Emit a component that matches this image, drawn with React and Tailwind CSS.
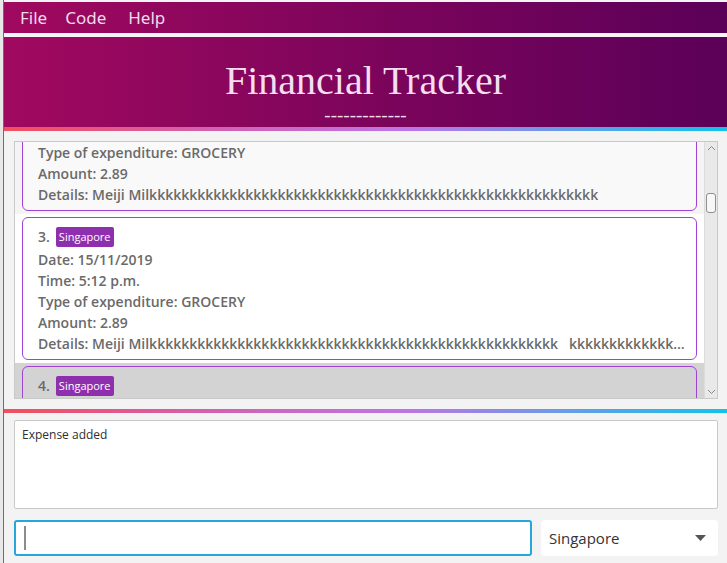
import React from 'react';

const sans = { fontFamily: '"Open Sans", "Noto Sans", sans-serif' };

const expenses = [
  { n: 2, date: '15/11/2019', time: '5:12 p.m.', type: 'GROCERY', amount: '2.89', details: `Meiji Milk${'k'.repeat(55)}` },
  { n: 3, date: '15/11/2019', time: '5:12 p.m.', type: 'GROCERY', amount: '2.89', details: `Meiji Milk${'k'.repeat(50)}   ${'k'.repeat(20)}` },
  { n: 4, date: '15/11/2019', time: '5:12 p.m.', type: 'GROCERY', amount: '2.89', details: 'Meiji Milk' },
];

const rowBg = ['bg-[#f4f4f4]', 'bg-white', 'bg-[#d3d3d3]'];
const cardBg = ['bg-[#f9f9f9]', 'bg-white', 'bg-[#d3d3d3]'];

const GradientLine = () => (
  <div className="h-[4px] w-full bg-[linear-gradient(to_right,#f44e5c,#d162b4_30%,#bf74e4_55%,#12c3e9)]" />
);

const ExpenseCard = ({ item, i }) => (
  <div className={`px-[7px] py-[3px] ${rowBg[i]}`}>
    <div className={`rounded-[6px] border border-[#a142d6] pl-[15px] pr-2 pt-[8px] pb-[5px] text-[14px] font-semibold leading-[21px] text-[#6a6a6a] ${cardBg[i]}`}>
      <div className="flex items-center gap-[6px] pb-[2px]">
        <span>{item.n}.</span>
        <span className="rounded-[2px] bg-[#8e30ae] px-[3px] text-[11px] font-normal leading-[20px] text-white">Singapore</span>
      </div>
      <div>Date: {item.date}</div>
      <div>Time: {item.time}</div>
      <div>Type of expenditure: {item.type}</div>
      <div>Amount: {item.amount}</div>
      <div className="truncate whitespace-pre">Details: {item.details}</div>
    </div>
  </div>
);

const App = () => {
  return (
    <div className="flex h-[563px] w-[727px] overflow-hidden bg-[#e4e4e4]" style={sans}>
      <div className="w-[4px] shrink-0 border-r border-[#6e6e6e] bg-[#e8e8e8]" />
      <div className="flex min-w-0 flex-1 flex-col bg-[#f3f3f3]">
        <div className="h-[2px] bg-[#f4f4f4]" />
        <div className="flex h-[31px] items-center gap-[18px] bg-[linear-gradient(to_right,#a0095f,#5b0058)] pl-[16px] text-[17px] text-[#f3d9ec]" style={{ fontFamily: '"Noto Sans", "Open Sans", sans-serif' }}>
          <span>File</span>
          <span>Code</span>
          <span className="ml-[4px]">Help</span>
        </div>
        <div className="h-[4px] bg-[#f6f6f6]" />
        <div className="flex h-[90px] flex-col items-center bg-[linear-gradient(to_right,#a0095f,#5b0058)] text-[#f3dff0]" style={{ fontFamily: '"Liberation Serif", serif' }}>
          <div className="pt-[22px] text-[40px] leading-[44px]">Financial Tracker</div>
          <div className="pt-[4px] text-[19px] leading-[16px]">-------------</div>
        </div>
        <GradientLine />

        <div className="flex flex-1 flex-col pl-[10px] pr-[9px] pb-[6px] pt-[10px]">
          <div className="flex h-[258px] border border-[#c9c9c9] bg-[#f4f4f4]">
            <div className="min-w-0 flex-1 overflow-hidden">
              <div className="-mt-[77px]">
                {expenses.map((item, i) => (
                  <ExpenseCard key={item.n} item={item} i={i} />
                ))}
              </div>
            </div>
            <div className="flex w-[13px] flex-col items-center border-l border-[#dcdcdc] bg-[#e9e9e9]">
              <svg width="9" height="10" viewBox="0 0 9 10" className="mt-[2px]">
                <path d="M1 6 L4.5 2.5 L8 6" fill="none" stroke="#8a8a8a" strokeWidth="1" />
              </svg>
              <div className="mt-[39px] h-[20px] w-[10px] rounded-[3px] border border-[#8f8f8f] bg-[#f7f7f7]" />
              <div className="flex-1" />
              <svg width="9" height="10" viewBox="0 0 9 10" className="mb-[2px]">
                <path d="M1 4 L4.5 7.5 L8 4" fill="none" stroke="#8a8a8a" strokeWidth="1" />
              </svg>
            </div>
          </div>

          <div className="-ml-[10px] -mr-[9px] mt-[10px]">
            <GradientLine />
          </div>

          <div className="mt-[7px] h-[89px] rounded-[2px] border border-[#c9c9c9] bg-white px-[7px] pt-[5px] text-[12px] text-[#2f2f2f]">
            Expense added
          </div>

          <div className="mt-[11px] flex h-[36px] gap-[9px]">
            <div className="flex flex-1 items-center rounded-[3px] border-2 border-[#26a6da] bg-white pl-[8px]">
              <div className="h-[24px] w-[2px] bg-[#8c8c8c]" />
            </div>
            <div className="flex w-[177px] items-center justify-between rounded-[4px] bg-white pl-[8px] pr-[12px] text-[15px] text-[#333]">
              <span>Singapore</span>
              <svg width="11" height="6" viewBox="0 0 11 6">
                <path d="M0 0 L11 0 L5.5 6 Z" fill="#555" />
              </svg>
            </div>
          </div>
        </div>
      </div>
    </div>
  );
};

export default App;
